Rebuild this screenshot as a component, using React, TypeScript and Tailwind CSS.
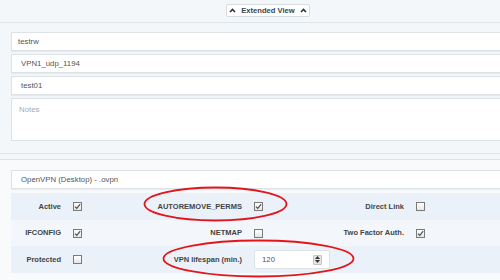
import React from 'react';

const Check: React.FC<{ on?: boolean }> = ({ on }) => (
    <span className="w-[9px] h-[9px] border border-[#7a7a7a] bg-gradient-to-b from-[#ffffff] to-[#e6e6e6] flex items-center justify-center shrink-0">
        {on && (
            <svg width="7" height="7" viewBox="0 0 7 7">
                <polyline points="1,3.6 2.8,5.4 6.2,1.2" fill="none" stroke="#4a4a4a" strokeWidth="1.1" />
            </svg>
        )}
    </span>
);

const Chevron: React.FC = () => (
    <svg width="7" height="5" viewBox="0 0 7 5">
        <polyline points="1,4 3.5,1.4 6,4" fill="none" stroke="#333" strokeWidth="1.6" />
    </svg>
);

const App: React.FC = () => {
    const input = "h-[19px] w-[500px] bg-white border border-[#dde2e6] shadow-[0_1px_1px_rgba(0,0,0,0.05)] flex items-center text-[7.8px] text-[#555]";
    const label = "text-right font-bold text-[7.5px] text-[#444] pr-[12px]";

    return (
        <div className="w-[500px] h-[280px] overflow-hidden relative bg-[#f4f7fa] font-['Liberation_Sans',Arial,sans-serif]">
            {/* top bar */}
            <div className="h-[23px] border-b border-[#dfe4e8] pl-[226px] pt-[4px]">
                <div className="w-[84px] h-[13px] bg-white border border-[#d8dde2] rounded-[2px] flex items-center justify-center gap-[5px] text-[7.6px] font-bold text-[#3b4550]">
                    <Chevron />
                    <span>Extended View</span>
                    <Chevron />
                </div>
            </div>

            {/* panel 1 */}
            <div className="pl-[11px] pt-[9px] pb-[12px] flex flex-col gap-[3px] border-b border-[#dfe3e7]">
                <div className={input + " pl-[6px]"}>testrw</div>
                <div className={input + " pl-[9px]"}>VPN1_udp_1194</div>
                <div className={input + " pl-[9px]"}>test01</div>
                <div className="h-[43px] w-[500px] bg-white border border-[#dde2e6] pl-[7px] pt-[5px] text-[7.8px] text-[#aaa]">Notes</div>
            </div>

            {/* panel 2 */}
            <div className="mt-[5px] border-t border-[#dfe3e7] bg-[#f8fafc] pl-[11px] pt-[10px]">
                <div className={input + " h-[18px] pl-[9px]"}>OpenVPN (Desktop) - .ovpn</div>

                <div className="mt-[4px] flex flex-col">
                    <div className="h-[27px] bg-[#eaf1f8] flex items-center">
                        <span className={label + " w-[62px]"}>Active</span>
                        <Check on />
                        <span className={label + " w-[172px]"}>AUTOREMOVE_PERMS</span>
                        <Check on />
                        <span className={label + " w-[153px]"}>Direct Link</span>
                        <Check />
                    </div>
                    <div className="h-[26px] bg-[#f3f7fb] flex items-center">
                        <span className={label + " w-[62px]"}>IFCONFIG</span>
                        <Check on />
                        <span className={label + " w-[172px]"}>NETMAP</span>
                        <Check />
                        <span className={label + " w-[153px]"}>Two Factor Auth.</span>
                        <Check on />
                    </div>
                    <div className="h-[27px] bg-[#eaf1f8] flex items-center">
                        <span className={label + " w-[62px]"}>Protected</span>
                        <Check />
                        <span className={label + " w-[172px]"}>VPN lifespan (min.)</span>
                        <div className="w-[76px] h-[19px] bg-white border border-[#dde2e6] rounded-[2px] flex items-center justify-between pl-[7px] pr-[7px] text-[7.8px] text-[#555]">
                            <span>120</span>
                            <span className="w-[9px] h-[10px] bg-[#e4e4e4] border border-[#c4c4c4] rounded-[1px] flex flex-col items-center justify-center gap-[1px]">
                                <svg width="5" height="3" viewBox="0 0 5 3"><polygon points="0,3 2.5,0 5,3" fill="#333" /></svg>
                                <svg width="5" height="3" viewBox="0 0 5 3"><polygon points="0,0 2.5,3 5,0" fill="#333" /></svg>
                            </span>
                        </div>
                    </div>
                </div>
                <div className="h-[20px]" />
            </div>

            {/* red annotation ellipses */}
            <svg className="absolute left-0 top-0 pointer-events-none" width="500" height="280">
                <ellipse cx="215.5" cy="204" rx="71" ry="16.5" fill="none" stroke="#e3141b" strokeWidth="1.8" />
                <ellipse cx="258.5" cy="258.5" rx="95" ry="18" fill="none" stroke="#e3141b" strokeWidth="1.8" />
            </svg>
        </div>
    );
};

export default App;
